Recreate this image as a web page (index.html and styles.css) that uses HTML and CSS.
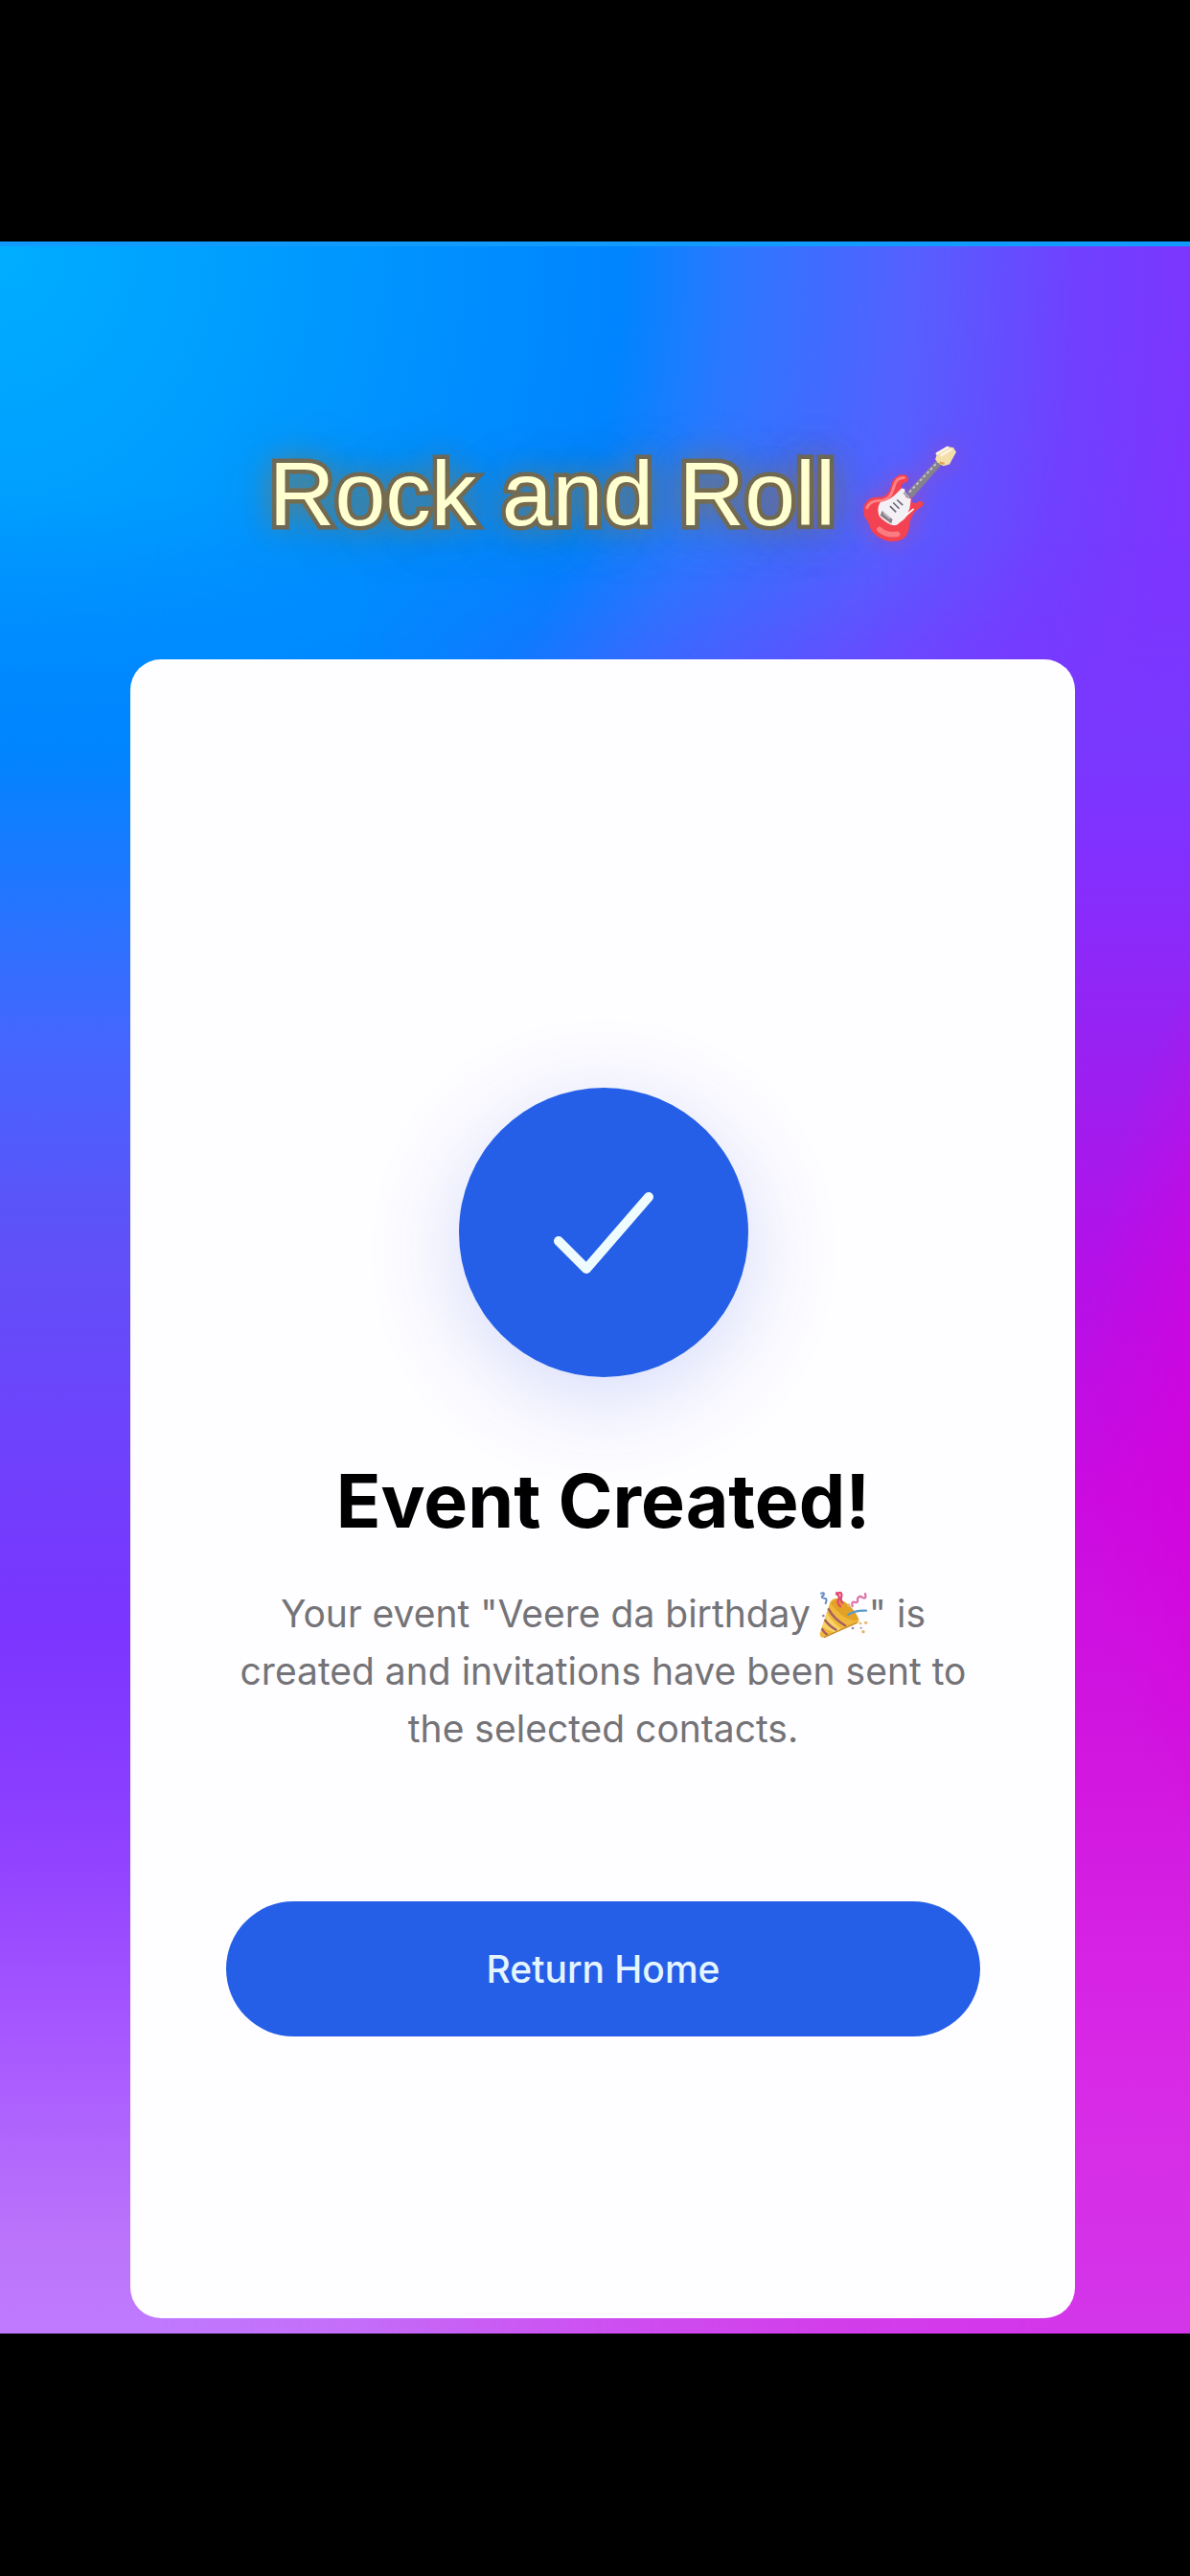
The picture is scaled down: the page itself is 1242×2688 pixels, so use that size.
FILE: index.html
```html
<!DOCTYPE html>
<html lang="en">
<head>
    <meta charset="UTF-8">
    <meta name="viewport" content="width=device-width, initial-scale=1.0">
    <title>Event Created</title>
    <link rel="stylesheet" href="styles.css">
</head>
<body>
    <main class="stage">
        <h1 class="title">
            <span>Rock and Roll</span>
            <svg class="guitar" viewBox="110 65 310 320" role="img" aria-label="guitar">
                <path d="M257 218 L352 116 L366 132 L271 239Z" fill="#85828e"/>
                <path d="M264 219 L356 121" stroke="#c5c2cc" stroke-width="6" stroke-dasharray="9 7"/>
                <path d="M345 117 L352 94 L382 76 L402 79 L411 93 L405 104 L390 132 L371 137 L359 131Z" fill="#f4dfa9"/>
                <path d="M350 98 L384 78 M364 103 L394 86" stroke="#fff6ec" stroke-width="7" stroke-linecap="round"/>
                <path d="M359 126 L374 130" stroke="#e3a052" stroke-width="7"/>
                <path d="M120 282 C117 252 138 233 166 235 C193 235 201 219 206 200 C211 174 231 159 251 165 C264 170 263 185 252 188 C236 194 235 207 243 213 L270 239 C271 257 281 257 294 248 C309 245 313 258 301 266 C287 275 277 283 271 298 C260 318 268 341 251 359 C237 376 205 379 180 367 C157 356 143 344 138 323 C135 307 121 303 120 282Z" fill="#f34251"/>
                <path d="M131 268 C139 245 160 247 179 245 C205 240 211 218 216 199 C221 181 234 174 247 174" fill="none" stroke="#ff8184" stroke-width="9" stroke-linecap="round"/>
                <path d="M170 336 C182 348 200 354 226 351" fill="none" stroke="#fb7c80" stroke-width="17" stroke-linecap="round"/>
                <path d="M239 207 L249 209 L252 235 L269 240 C266 257 267 270 260 281 C258 299 242 309 226 321 C211 329 191 316 170 296 C164 283 163 260 174 250 C198 248 218 230 239 207Z" fill="#f4f1f6"/>
                <path d="M247 220 L263 237" stroke="#aaa9b1" stroke-width="9"/>
                <path d="M225 243 L243 260 M213 252 L232 271 M203 263 L222 282" stroke="#696973" stroke-width="5"/>
                <path d="M178 278 L211 305 L207 318 L172 293Z" fill="#8a7f87"/>
                <path d="M182 284 L203 302" stroke="#c3bdc4" stroke-width="5"/>
                <path d="M253 292 L276 273" stroke="#fff" stroke-width="5" stroke-linecap="round"/>
            </svg>
        </h1>

        <section class="card">
            <div class="badge">
                <svg class="check" viewBox="0 0 110 90" aria-hidden="true">
                    <path d="M8 54 L37 83 L102 8" fill="none" stroke="#effcff" stroke-width="10" stroke-linecap="round" stroke-linejoin="round"/>
                </svg>
            </div>
            <h2>Event Created!</h2>
            <p>
                Your event "Veere da birthday
                <svg class="popper" viewBox="58 50 162 162" role="img" aria-label="party popper"><path d="M66 190 L98 93 Q105 78 119 80 C150 87 179 119 188 147 Q190 157 179 160 L79 202 Q66 204 66 190Z" fill="#efb83b"/><path d="M98 93 L119 80 C150 87 179 119 188 147 L168 148 C142 143 118 120 98 93Z" fill="#e3a226"/><path d="M74 168 L88 124 Q101 150 133 176 L113 187 Q87 178 74 168Z" fill="#f8d465"/><path d="M92 111 Q110 145 148 166 M81 146 Q94 166 119 179 M72 174 Q80 188 90 194" fill="none" stroke="#a35e62" stroke-width="7"/><path d="M79 202 L182 155" stroke="#c38b2d" stroke-width="4"/><path d="M119 62 Q130 75 124 84 Q119 92 130 105 M118 67 Q136 54 134 73 Q129 86 137 94" fill="none" stroke="#e34a73" stroke-width="7" stroke-linecap="round"/><path d="M70 64 Q82 59 78 69 Q65 78 80 79 Q91 79 84 95" fill="none" stroke="#638cc0" stroke-width="6" stroke-linecap="round"/><path d="M168 104 Q163 88 177 92 Q187 94 184 81 Q190 68 199 77 Q213 83 208 65" fill="none" stroke="#dc76aa" stroke-width="7" stroke-linecap="round"/><path d="M155 130 Q178 116 211 118" fill="none" stroke="#5c9ac9" stroke-width="7" stroke-linecap="round"/><g fill="#e9b266"><circle cx="156" cy="101" r="5"/><circle cx="193" cy="158" r="4"/><circle cx="210" cy="156" r="5"/><circle cx="202" cy="184" r="5"/></g><g fill="#9682a8"><circle cx="77" cy="134" r="4"/><circle cx="169" cy="173" r="4"/><circle cx="195" cy="172" r="3"/></g></svg>" is<br>
                created and invitations have been sent to the selected contacts.
            </p>
            <button type="button" class="home-btn">Return Home</button>
        </section>
    </main>
</body>
</html>
```
FILE: styles.css
```css
* {
    box-sizing: border-box;
}
body {
    margin: 0;
    padding: 252px 0;
    background-color: #000;
    font-family: Inter, "Liberation Sans", sans-serif;
}
.stage {
    position: relative;
    isolation: isolate;
    padding: 204px 120px 16px 136px;
    border-top: 5px solid #129bff;
    background:
        linear-gradient(to bottom, transparent 80%, #d050ee 98%),
        radial-gradient(1250px 1440px at 0 0, #00aeff 0%, #0099ff 26%, #0084ff 52%, #2b78ff 61%, #5560ff 76%, #7040ff 90%, #7d35ff 100%);
}
.stage::before,
.stage::after {
    content: "";
    position: absolute;
    inset: 0;
    z-index: -1;
}
/* violet side of the backdrop, fades out to the right */
.stage::before {
    background: linear-gradient(to bottom, transparent 12%, #0085ff 24%, #4466ff 38%, #6050f8 48%, #7b35ff 66%, #8d40ff 76%, #a858ff 86%, #bb75fa 96%, #c07aff 100%);
    mask-image: linear-gradient(to right, #000 12%, transparent 75%);
}
/* magenta side of the backdrop, fades out to the left */
.stage::after {
    background:
        radial-gradient(260px 560px at 112% 56%, #d800dc 20%, transparent 100%),
        linear-gradient(to bottom, transparent 14%, #7a38ff 24%, #8130ff 29%, #9722f2 38%, #b411e8 49%, #cb0be0 60%, #d218e0 74%, #d829e6 87%, #d336e9 100%);
    mask-image: linear-gradient(to right, transparent 30%, #000 90%);
}
.title {
    display: flex;
    align-items: center;
    justify-content: center;
    gap: 26px;
    margin: 0 0 119px;
    padding-left: 24px;
    font-family: "Liberation Sans", Arial, sans-serif;
    font-size: 95px;
    font-weight: 400;
    line-height: 108px;
    color: #ffffd0;
}
.title span {
    -webkit-text-stroke: 9px #69685f;
    paint-order: stroke fill;
    text-shadow: 0 0 28px rgba(145, 118, 60, 0.85), 0 4px 52px rgba(125, 115, 70, 0.8);
}
.guitar {
    width: 103px;
    height: 107px;
    filter: drop-shadow(0 0 12px rgba(225, 60, 110, 0.45));
}
.card {
    display: flex;
    flex-direction: column;
    align-items: center;
    padding: 447px 99px 294px 100px;
    border-radius: 32px;
    background-color: #fefdff;
    text-align: center;
}
.badge {
    display: flex;
    align-items: center;
    justify-content: center;
    width: 302px;
    height: 302px;
    border-radius: 50%;
    background-color: #265fe7;
    box-shadow: 0 20px 100px rgba(38, 75, 231, 0.2);
}
.check {
    width: 110px;
    height: 90px;
}
.card h2 {
    margin: 81px 0 40px;
    font-size: 77px;
    font-weight: 700;
    line-height: 96px;
    color: #000;
}
.card p {
    margin: 0 0 150px;
    font-size: 39px;
    line-height: 60px;
    color: #747377;
}
.popper {
    width: 54px;
    height: 54px;
    margin: -18px 0 -12px -4px;
    vertical-align: -2px;
}
.home-btn {
    width: 100%;
    height: 141px;
    border: none;
    border-radius: 71px;
    background-color: #265fe7;
    color: #e4f5ff;
    font-family: inherit;
    font-size: 39px;
    font-weight: 500;
    cursor: pointer;
}
.home-btn:hover {
    background-color: #1d50cc;
}
```
